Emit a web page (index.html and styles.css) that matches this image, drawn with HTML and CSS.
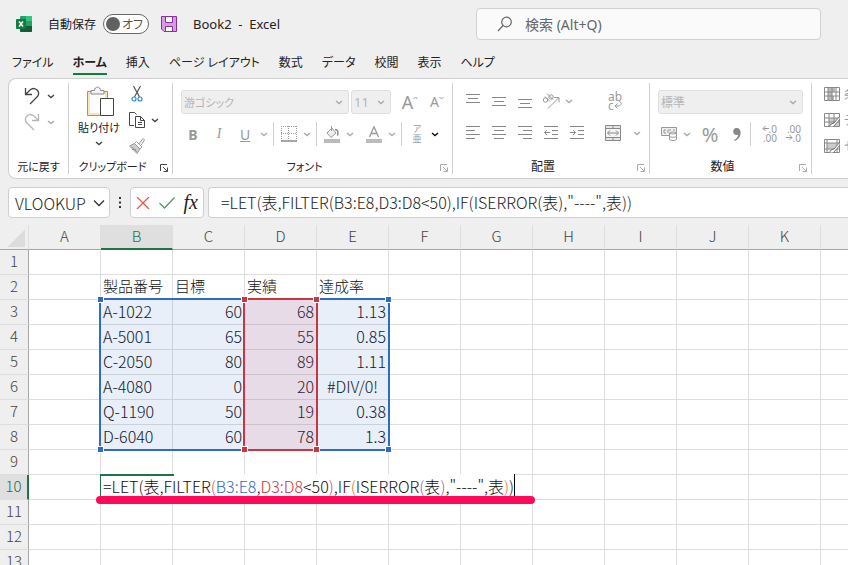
FILE: index.html
```
<!DOCTYPE html>
<html lang="ja">
  <head>
    <meta charset="utf-8">
    <meta name="viewport" content="width=device-width,initial-scale=1.0">
    <title>Book2 - Excel</title>
    <link rel="stylesheet" href="styles.css">
  </head>
  <body>
    <!-- shared icons -->
    <svg class="defs">
      <symbol id="chev" viewBox="0 0 10 10"><path d="M2 4l3 2.5L8 4" fill="none" stroke="currentColor" stroke-width="1.4"/></symbol>
      <symbol id="launcher" viewBox="0 0 8 8"><path d="M.5 7V.5H7M3 3l4 4M7.5 3.500v4h-4" fill="none" stroke="currentColor"/></symbol>
    </svg>

    <header class="titlebar">
      <svg class="logo" width="16" height="16" viewBox="0 0 16 16">
        <rect x="4" width="12" height="16" rx="1" fill="#21a366"/>
        <path d="M10 0h5a1 1 0 0 1 1 1v4h-6z" fill="#33c481"/>
        <path d="M4 5h6v5H4z" fill="#107c41"/>
        <path d="M4 10h12v5a1 1 0 0 1-1 1H5a1 1 0 0 1-1-1z" fill="#185c37"/>
        <path d="M10 10h6v-5h-6z" fill="#21a366"/>
        <rect y="3" width="10" height="10" rx="1" fill="#107c41"/>
        <path d="M3 5.500l4 5M7 5.500l-4 5" stroke="#fff" stroke-width="1.500"/>
      </svg>
      <label class="autosave">
        自動保存
        <span class="toggle"><input type="checkbox" aria-label="自動保存"><i></i><span>オフ</span></span>
      </label>
      <button class="save" aria-label="保存">
        <svg width="16" height="16" viewBox="0 0 16 16">
          <path d="M.5.5h15v15H3L.5 13z" fill="#d79be0" stroke="#8b2fa0"/>
          <path d="M4.500.5h7v6h-7z" fill="#fff" stroke="#8b2fa0"/>
          <path d="M4.500 15.500v-5h7v5z" fill="#fff" stroke="#8b2fa0"/>
        </svg>
      </button>
      <span class="doc">Book2&nbsp; -&nbsp; Excel</span>
      <label class="search">
        <svg width="16" height="16" viewBox="0 0 16 16" fill="none" stroke="#666" stroke-width="1.200"><circle cx="9.500" cy="6" r="4.800"/><path d="M6 9.500L1 15"/></svg>
        <input type="text" placeholder="検索 (Alt+Q)">
      </label>
    </header>

    <nav class="tabs">
      <a href="#">ファイル</a>
      <a href="#" class="active">ホーム</a>
      <a href="#">挿入</a>
      <a href="#">ページ レイアウト</a>
      <a href="#">数式</a>
      <a href="#">データ</a>
      <a href="#">校閲</a>
      <a href="#">表示</a>
      <a href="#">ヘルプ</a>
    </nav>

    <div class="ribbon">
      <section class="group undo">
        <div class="tools">
          <div class="split">
            <button aria-label="元に戻す"><svg width="16" height="18" viewBox="0 0 16 18" fill="none" stroke="#444" stroke-width="1.300"><path d="M1.500 1v6.500H8M1.800 7.200L6 3c3-2.500 6-1.500 7.500.5S15 8 13 10l-7 7"/></svg></button>
            <svg class="chev dark"><use href="#chev"/></svg>
          </div>
          <div class="split">
            <button aria-label="やり直し"><svg width="16" height="18" viewBox="0 0 16 18" fill="none" stroke="#b5b5b5" stroke-width="1.300"><path d="M14.500 1v6.500H8M14.200 7.200L10 3C7 .5 4 1.500 2.500 3.500S1 8 3 10l7 7"/></svg></button>
            <svg class="chev"><use href="#chev"/></svg>
          </div>
        </div>
        <footer><span>元に戻す</span></footer>
      </section>

      <section class="group clipboard">
        <div class="tools">
          <button class="paste">
            <svg class="board" width="30" height="32" viewBox="0 0 30 32">
              <path d="M1.500 5.500h20v24h-20z" fill="#fce3b0" stroke="#e0832a"/>
              <path d="M4 8h15v19H4z" fill="#fff"/>
              <path d="M5 8V4.500h3.500C8.500 0 14.500 0 14.500 4.500H18V8z" fill="#f4f4f4" stroke="#888"/>
              <path d="M14.500 12.500h13v17h-13z" fill="#fff" stroke="#444"/>
            </svg>
            貼り付け
            <svg class="chev dark"><use href="#chev"/></svg>
          </button>
          <div class="clip-col">
            <button aria-label="切り取り"><svg width="16" height="16" viewBox="0 0 16 16" fill="none"><path d="M4.500 0l6 11M11.500 0l-6 11" stroke="#555" stroke-width="1.200"/><circle cx="5" cy="13" r="2" stroke="#2f8ad0" stroke-width="1.200"/><circle cx="11" cy="13" r="2" stroke="#2f8ad0" stroke-width="1.200"/></svg></button>
            <div class="split">
              <button aria-label="コピー"><svg width="16" height="16" viewBox="0 0 16 16" fill="#fff" stroke="#444"><path d="M5 13.500H.5V.5h5l2 2"/><path d="M6.500 4.500h5l4 4v7h-9zM11.500 4.500v4h4M9 10.500h4M9 12.500h4"/></svg></button>
              <svg class="chev dark"><use href="#chev"/></svg>
            </div>
            <button aria-label="書式のコピー"><svg width="16" height="16" viewBox="0 0 16 16" fill="#ccc" stroke="#999"><path d="M.5 8l5-2.500 5.500 5.500-3 4.500z"/><path d="M5.500 5.500l2-2 5.500 5.500-2 2zM10 6l4-5.500 1.500 1.500L12 7.500" fill="#fff"/><path d="M3 9l5 5M3 11.500h4" fill="none"/></svg></button>
          </div>
        </div>
        <footer><span>クリップボード</span><button class="launch dark" aria-label="クリップボードの設定"><svg width="8" height="8"><use href="#launcher"/></svg></button></footer>
      </section>

      <section class="group font">
        <div class="tools">
          <div class="row">
            <label class="combo font-name"><select aria-label="フォント" disabled><option>游ゴシック</option></select><svg class="chev"><use href="#chev"/></svg></label>
            <label class="combo font-size"><select aria-label="サイズ" disabled><option>11</option></select><svg class="chev"><use href="#chev"/></svg></label>
            <button class="grow" aria-label="拡大" disabled>A<svg width="5" height="4" viewBox="0 0 5 4"><path d="M.5 3l2-2 2 2" fill="none" stroke="currentColor"/></svg></button>
            <button class="grow small" aria-label="縮小" disabled>A<svg width="5" height="4" viewBox="0 0 5 4"><path d="M.5 1l2 2 2-2" fill="none" stroke="currentColor"/></svg></button>
          </div>
          <div class="row">
            <button class="tool letter" disabled><b>B</b></button>
            <button class="tool letter italic" disabled><i>I</i></button>
            <button class="tool letter" disabled><u>U</u></button>
            <svg class="chev"><use href="#chev"/></svg>
            <span class="sep"></span>
            <button class="tool" aria-label="罫線" disabled><svg width="16" height="16" viewBox="0 0 16 16" fill="none" stroke="#999"><path d="M.5 0v15M15.500 0v15M0 .5h16M7.500 0v15M0 7.500h16" stroke-dasharray="1 1"/><path d="M0 15h16" stroke="#888" stroke-width="1.500"/></svg></button>
            <svg class="chev"><use href="#chev"/></svg>
            <span class="sep"></span>
            <button class="tool" aria-label="塗りつぶし" disabled><svg width="16" height="17" viewBox="0 0 16 17"><path d="M3 7l5-5 4 5-5 4.500zM7.500 0v5" fill="#eee" stroke="#999"/><path d="M11 3.500c3 0 3.500 3 2.500 6" fill="none" stroke="#888" stroke-width="1.500"/><path d="M0 13h16v4H0z" fill="#bbb"/></svg></button>
            <svg class="chev"><use href="#chev"/></svg>
            <button class="tool color" aria-label="フォントの色" disabled><svg width="16" height="17" viewBox="0 0 16 17"><path d="M3.500 11L8 .8 12.500 11M5 7.500h6" fill="none" stroke="#999" stroke-width="1.300"/><path d="M0 13h16v4H0z" fill="#bbb"/></svg></button>
            <svg class="chev"><use href="#chev"/></svg>
            <span class="sep"></span>
            <button class="tool ruby" disabled><span>ア</span><span>亜</span></button>
            <svg class="chev black"><use href="#chev"/></svg>
          </div>
        </div>
        <footer><span>フォント</span><button class="launch" aria-label="フォントの設定"><svg width="8" height="8"><use href="#launcher"/></svg></button></footer>
      </section>

      <section class="group align">
        <div class="tools">
          <div class="align-grid">
            <button class="tool" aria-label="上揃え" disabled><svg width="14" height="14" viewBox="0 0 14 14"><path d="M0 .5h14M2 4.500h10M0 8.500h14" stroke="#888"/></svg></button>
            <button class="tool" aria-label="上下中央揃え" disabled><svg width="14" height="14" viewBox="0 0 14 14"><path d="M0 3.500h14M2 7.500h10M0 11.500h14" stroke="#888"/></svg></button>
            <button class="tool" aria-label="下揃え" disabled><svg width="14" height="14" viewBox="0 0 14 14"><path d="M0 5.500h14M2 9.500h10M0 13.500h14" stroke="#888"/></svg></button>
            <button class="tool" aria-label="方向" disabled><svg width="18" height="16" viewBox="0 0 18 16" fill="none" stroke="#999"><path d="M6 15.500L16.500 5M12 4.500h5v5"/><circle cx="3.500" cy="7" r="2.200"/><path d="M3 3.500l5 5"/><circle cx="9" cy="4" r="2.200"/><path d="M5 .5l6 6"/></svg></button>
            <svg class="chev"><use href="#chev"/></svg>
            <button class="tool" aria-label="左揃え" disabled><svg width="14" height="14" viewBox="0 0 14 14"><path d="M0 .5h14M0 4.500h9M0 8.500h14M0 12.500h9" stroke="#888"/></svg></button>
            <button class="tool" aria-label="中央揃え" disabled><svg width="14" height="14" viewBox="0 0 14 14"><path d="M0 .5h14M2 4.500h10M0 8.500h14M2 12.500h10" stroke="#888"/></svg></button>
            <button class="tool" aria-label="右揃え" disabled><svg width="14" height="14" viewBox="0 0 14 14"><path d="M0 .5h14M5 4.500h9M0 8.500h14M5 12.500h9" stroke="#888"/></svg></button>
            <button class="tool" aria-label="インデントを減らす" disabled><svg width="14" height="14" viewBox="0 0 14 14" fill="none" stroke="#888"><path d="M0 .5h14M8 4.500h6M8 8.500h6M0 12.500h14M.5 6.500H6M3 4L.5 6.500 3 9"/></svg></button>
            <button class="tool" aria-label="インデントを増やす" disabled><svg width="14" height="14" viewBox="0 0 14 14" fill="none" stroke="#888"><path d="M0 .5h14M8 4.500h6M8 8.500h6M0 12.500h14M0 6.500h5.500M3 4l2.500 2.500L3 9"/></svg></button>
          </div>
          <span class="sep tall"></span>
          <div class="merge-col">
            <button class="tool wrap" aria-label="折り返して全体を表示する" disabled><span>ab</span><span>c<svg width="8" height="8" viewBox="0 0 8 8" fill="none" stroke="currentColor"><path d="M5 0c3 1 3 5-1 5H1M3.500 2.500L1 5l2.500 2.500"/></svg></span></button>
            <div class="split">
              <button class="tool" aria-label="セルを結合して中央揃え" disabled><svg width="16" height="16" viewBox="0 0 16 16" fill="none" stroke="#888"><path d="M.5.5h15v15H.5z" fill="#e6e6e6"/><path d="M.5 3.500h15v9H.5z" fill="#f4f4f4"/><path d="M8 0v3.500M8 12.500V16M3 8h10M5 5.500L2.500 8 5 10.500M11 5.500L13.500 8 11 10.500"/></svg></button>
              <svg class="chev"><use href="#chev"/></svg>
            </div>
          </div>
        </div>
        <footer><span>配置</span><button class="launch" aria-label="配置の設定"><svg width="8" height="8"><use href="#launcher"/></svg></button></footer>
      </section>

      <section class="group number">
        <div class="tools">
          <div class="row">
            <label class="combo"><select aria-label="表示形式" disabled><option>標準</option></select><svg class="chev"><use href="#chev"/></svg></label>
          </div>
          <div class="row">
            <button class="tool" aria-label="通貨表示形式" disabled><svg width="16" height="14" viewBox="0 0 16 14" fill="#fff" stroke="#999"><path d="M.5.5h15v8H.5z" fill="#eee"/><path d="M5 3H3v3h2M7 6V3h3M12 3h2" fill="none"/><path d="M8.500 6v6.500c1 1.300 6 1.300 7 0V6c-1-1.300-6-1.300-7 0c1 1.300 6 1.300 7 0M8.500 9.500c1 1 6 1 7 0"/></svg></button>
            <svg class="chev"><use href="#chev"/></svg>
            <button class="tool percent" disabled>%</button>
            <button class="tool comma" aria-label="桁区切り" disabled><svg width="8" height="13" viewBox="0 0 8 13"><path d="M4 0a3.500 3.500 0 1 0-.5 7C4.500 7 5 6.800 5.200 6.500 5 9 3.500 11 1 12l.5 1C6 11.500 8 8 7.500 3.500 7.200 1 5.500 0 4 0z" fill="#888"/></svg></button>
            <span class="sep"></span>
            <button class="tool decimal" aria-label="小数点以下の表示桁数を増やす" disabled><span><svg width="7" height="7" viewBox="0 0 7 7"><path d="M7 3.500H1M3.500 1L1 3.500 3.500 6" fill="none" stroke="currentColor"/></svg>.0</span><span>.00</span></button>
            <button class="tool decimal" aria-label="小数点以下の表示桁数を減らす" disabled><span>.00</span><span><svg width="7" height="7" viewBox="0 0 7 7"><path d="M0 3.500h6M3.500 1L6 3.500 3.500 6" fill="none" stroke="currentColor"/></svg>.0</span></button>
          </div>
        </div>
        <footer><span>数値</span><button class="launch" aria-label="数値の設定"><svg width="8" height="8"><use href="#launcher"/></svg></button></footer>
      </section>

      <section class="group styles">
        <div class="tools">
          <button disabled><svg width="16" height="14" viewBox="0 0 16 14"><path d="M.5.5h15v13H.5z" fill="#fff" stroke="#888"/><path d="M4 1h7v4H4zM4 5h4v4H4zM4 9h6v4H4z" fill="#bbb"/><path d="M4 0v14M8 0v14M12 0v14M0 5h16M0 9h16" stroke="#888" fill="none"/></svg>条件付き書式</button>
          <button disabled><svg width="16" height="14" viewBox="0 0 16 14"><path d="M.5.5h15v13H.5z" fill="#fff" stroke="#888"/><path d="M5 5h10v8H5z" fill="#ccc"/><path d="M5 0v14M10 0v14M0 5h16M0 9h16" stroke="#888" fill="none"/><path d="M16 3l-6 7-3 1-2 3h4l2-2 5-6z" fill="#fff" stroke="#777"/></svg>テーブルとして書式設定</button>
          <button disabled><svg width="16" height="14" viewBox="0 0 16 14"><path d="M.5.5h15v13H.5z" fill="#fff" stroke="#888"/><path d="M3 4h10v6H3z" fill="#ccc"/><path d="M3 0v14M13 0v14M0 4h16M0 10h16" stroke="#888" fill="none"/><path d="M16 3l-6 7-3 1-2 3h4l2-2 5-6z" fill="#fff" stroke="#777"/></svg>セルのスタイル</button>
        </div>
        <footer><span>スタイル</span></footer>
      </section>
    </div>

    <div class="formula-bar">
      <label class="box name-box">
        <input type="text" value="VLOOKUP" aria-label="名前ボックス">
        <svg width="12" height="8" viewBox="0 0 12 8"><path d="M1 1.500l5 5 5-5" fill="none" stroke="#333" stroke-width="1.300"/></svg>
      </label>
      <svg class="dots" width="2" height="11" viewBox="0 0 2 11"><path d="M0 0h2v2H0zM0 4.500h2v2H0zM0 9h2v2H0z" fill="#333"/></svg>
      <div class="box fx-box">
        <button aria-label="キャンセル"><svg width="14" height="12" viewBox="0 0 14 12"><path d="M1 0l12 12M13 0L1 12" stroke="#e8564a" stroke-width="1.300"/></svg></button>
        <button aria-label="入力"><svg width="16" height="12" viewBox="0 0 16 12"><path d="M.5 6l5 5L15.500.5" fill="none" stroke="#4a9f63" stroke-width="1.300"/></svg></button>
        <button class="fx">fx</button>
      </div>
      <input class="box formula" type="text" aria-label="数式バー" value="=LET(表,FILTER(B3:E8,D3:D8&lt;50),IF(ISERROR(表),&quot;----&quot;,表))">
    </div>

    <main class="sheet">
      <table>
        <colgroup><col class="rowhead"><col span="12"></colgroup>
        <thead>
          <tr><th class="corner"></th><th>A</th><th class="on">B</th><th>C</th><th>D</th><th>E</th><th>F</th><th>G</th><th>H</th><th>I</th><th>J</th><th>K</th><th></th></tr>
        </thead>
        <tbody>
          <tr><th>1</th><td></td><td></td><td></td><td></td><td></td><td></td><td></td><td></td><td></td><td></td><td></td><td></td></tr>
          <tr class="labels"><th>2</th><td></td><td>製品番号</td><td>目標</td><td>実績</td><td>達成率</td><td></td><td></td><td></td><td></td><td></td><td></td><td></td></tr>
          <tr><th>3</th><td></td><td>A-1022</td><td class="num">60</td><td class="num">68</td><td class="num">1.13</td><td></td><td></td><td></td><td></td><td></td><td></td><td></td></tr>
          <tr><th>4</th><td></td><td>A-5001</td><td class="num">65</td><td class="num">55</td><td class="num">0.85</td><td></td><td></td><td></td><td></td><td></td><td></td><td></td></tr>
          <tr><th>5</th><td></td><td>C-2050</td><td class="num">80</td><td class="num">89</td><td class="num">1.11</td><td></td><td></td><td></td><td></td><td></td><td></td><td></td></tr>
          <tr><th>6</th><td></td><td>A-4080</td><td class="num">0</td><td class="num">20</td><td class="err">#DIV/0!</td><td></td><td></td><td></td><td></td><td></td><td></td><td></td></tr>
          <tr><th>7</th><td></td><td>Q-1190</td><td class="num">50</td><td class="num">19</td><td class="num">0.38</td><td></td><td></td><td></td><td></td><td></td><td></td><td></td></tr>
          <tr><th>8</th><td></td><td>D-6040</td><td class="num">60</td><td class="num">78</td><td class="num">1.3</td><td></td><td></td><td></td><td></td><td></td><td></td><td></td></tr>
          <tr><th>9</th><td></td><td></td><td></td><td></td><td></td><td></td><td></td><td></td><td></td><td></td><td></td><td></td></tr>
          <tr>
            <th class="on">10</th><td></td>
            <td class="editing">
              <div class="editor">=LET(表,FILTER<span class="p2">(</span><span class="blue">B3:E8</span>,<span class="red">D3:D8</span>&lt;50<span class="p2">)</span>,IF<span class="p3">(</span>ISERROR<span class="p4">(</span>表<span class="p4">)</span>,"----",表<span class="p3">)</span>)</div>
              <div class="marker"></div>
            </td>
            <td></td><td></td><td></td><td></td><td></td><td></td><td></td><td></td><td></td><td></td>
          </tr>
          <tr><th>11</th><td></td><td></td><td></td><td></td><td></td><td></td><td></td><td></td><td></td><td></td><td></td><td></td></tr>
          <tr><th>12</th><td></td><td></td><td></td><td></td><td></td><td></td><td></td><td></td><td></td><td></td><td></td><td></td></tr>
          <tr><th>13</th><td></td><td></td><td></td><td></td><td></td><td></td><td></td><td></td><td></td><td></td><td></td><td></td></tr>
        </tbody>
      </table>
      <!-- referenced ranges -->
      <div class="range all"><i></i><i></i><i></i><i></i></div>
      <div class="range actual"><i></i><i></i><i></i><i></i></div>
    </main>
  </body>
</html>
```
FILE: styles.css
```
* {
  box-sizing: border-box;
}
body {
  margin: 0;
  height: 100vh;
  overflow: hidden;
  display: flex;
  flex-direction: column;
  background: #efefef;
  color: #222;
  font-family: "Noto Sans", "Noto Sans CJK JP", sans-serif;
  font-size: 12px;
  font-feature-settings: "palt";
}
button, input, select {
  font: inherit;
  font-feature-settings: inherit;
  color: inherit;
  border: 0;
  padding: 0;
  margin: 0;
  background: none;
}
button:disabled, select:disabled {
  color: #999;
  opacity: 1;
}
svg {
  display: block;
  flex: none;
}
.defs {
  position: absolute;
  width: 0;
  height: 0;
}
.chev {
  width: 10px;
  height: 10px;
  color: #aaa;
}
.dark {
  color: #444;
}
.black {
  color: #111;
}

/* title bar */
.titlebar {
  display: flex;
  align-items: center;
  height: 48px;
  padding: 0 27px 0 16px;
}
.autosave {
  display: flex;
  align-items: center;
  gap: 7px;
  margin-left: 16px;
}
.toggle {
  display: flex;
  align-items: center;
  justify-content: space-between;
  width: 46px;
  height: 20px;
  padding: 0 5px 0 2px;
  border: 1px solid #666;
  border-radius: 10px;
  background: #fff;
  color: #555;
}
.toggle input {
  position: absolute;
  opacity: 0;
}
.toggle i {
  width: 14px;
  height: 14px;
  border-radius: 50%;
  background: #616161;
}
.save {
  margin-left: 12px;
}
.doc {
  margin-left: 16px;
  font-size: 13px;
}
.search {
  display: flex;
  align-items: center;
  gap: 12px;
  width: 345px;
  height: 32px;
  margin-left: auto;
  padding: 0 20px;
  border: 1px solid #d0d0d0;
  border-radius: 4px;
  background: #fafafa;
  font-size: 14px;
}
.search input {
  flex: 1;
  min-width: 0;
  outline: none;
}
.search input::placeholder {
  color: #666;
}

/* tabs */
.tabs {
  display: flex;
  gap: 19px;
  height: 30px;
  padding: 5px 12px 0;
  line-height: 20px;
}
.tabs a {
  height: 22px;
  color: #222;
  text-decoration: none;
  white-space: nowrap;
}
.tabs .active {
  border-bottom: 2px solid #107c41;
  font-weight: 700;
}

/* ribbon */
.ribbon {
  display: flex;
  height: 101px;
  flex: none;
  margin-left: 8px;
  padding: 4px 0;
  overflow: hidden;
  border: 1px solid #cfcfcf;
  border-right: 0;
  border-radius: 8px 0 0 8px;
  background: #fff;
}
.group {
  display: flex;
  flex-direction: column;
  flex: none;
  padding: 0 8px;
  border-right: 1px solid #cfcfcf;
}
.group .tools {
  flex: 1;
}
.group footer {
  position: relative;
  height: 14px;
  padding-right: 16px;
  line-height: 14px;
  text-align: center;
  white-space: nowrap;
}
.launch {
  position: absolute;
  right: -4px;
  bottom: 2px;
  color: #aaa;
}
.launch.dark {
  color: #444;
}
.split {
  display: flex;
  align-items: center;
}
.row {
  display: flex;
  align-items: center;
  height: 24px;
}
.sep {
  width: 1px;
  height: 24px;
  background: #cfcfcf;
}
.tool {
  display: flex;
  align-items: center;
  justify-content: center;
  width: 22px;
  height: 24px;
}
.undo {
  width: 60px;
}
.undo .split {
  height: 26px;
  padding-left: 7px;
  gap: 6px;
}
.undo .chev {
  margin-right: -4px;
}
.undo footer {
  padding: 0;
  font-size: 11px;
}
.clipboard {
  width: 104px;
}
.clipboard .tools {
  display: flex;
  gap: 8px;
}
.clipboard footer {
  font-size: 11px;
}
.paste {
  display: flex;
  flex-direction: column;
  align-items: center;
  width: 44px;
  padding-top: 3px;
  font-size: 11px;
  line-height: 20px;
  white-space: nowrap;
}
.board {
  margin-left: 4px;
}
.clip-col {
  display: flex;
  flex-direction: column;
  gap: 10px;
  padding-top: 3px;
}
.clip-col .split {
  gap: 5px;
}
.clip-col button {
  width: 16px;
}
.font {
  width: 280px;
}
.font footer {
  font-size: 11px;
}
.font .tools, .number .tools {
  display: flex;
  flex-direction: column;
  gap: 8px;
  padding-top: 7px;
}
.font .row {
  gap: 2px;
}
.font .sep {
  margin: 0 2px;
}
.combo {
  display: flex;
  align-items: center;
  width: 147px;
  height: 24px;
  padding: 0 4px 0 2px;
  border: 1px solid #dedede;
  border-radius: 3px;
  background: #efefef;
}
.combo select {
  flex: 1;
  min-width: 0;
  appearance: none;
  color: #b5b5b5;
}
.font-name {
  width: 170px;
  font-size: 11px;
}
.font-size {
  width: 40px;
  font-size: 13px;
}
.grow {
  display: flex;
  width: 26px;
  justify-content: flex-end;
  font-size: 18px;
  line-height: 22px;
}
.grow svg {
  margin-top: 5px;
}
.grow.small {
  width: 24px;
  font-size: 14px;
}
.letter {
  width: 24px;
  font-size: 14px;
}
.italic {
  font-family: "Liberation Serif", serif;
}
.color {
  margin-left: 6px;
}
.ruby {
  flex-direction: column;
  font-size: 9px;
  line-height: 10px;
}
.align {
  width: 197px;
}
.align .tools {
  display: flex;
  gap: 6px;
  padding-top: 6px;
}
.align-grid {
  display: grid;
  grid-template-columns: repeat(5, 26px);
  grid-template-rows: 24px 24px;
  row-gap: 8px;
  align-items: center;
  margin-left: -1px;
}
.align-grid .tool {
  width: 26px;
}
.sep.tall {
  height: 62px;
}
.merge-col {
  display: flex;
  flex-direction: column;
  gap: 8px;
}
.merge-col .split {
  gap: 8px;
}
.wrap {
  flex-direction: column;
  width: 26px;
  font-size: 12px;
  line-height: 9px;
}
.wrap span {
  display: flex;
}
.number {
  width: 162px;
}
.number .row {
  gap: 2px;
}
.percent {
  width: 32px;
  font-size: 20px;
}
.comma {
  width: 18px;
}
.number .sep {
  margin: 0 2px;
}
.decimal {
  flex-direction: column;
  align-items: flex-end;
  width: 22px;
  font-size: 10px;
  line-height: 9px;
}
.decimal span {
  display: flex;
}
.styles {
  padding-left: 12px;
  border: 0;
}
.styles .tools {
  display: flex;
  flex-direction: column;
  gap: 8px;
  padding-top: 2px;
}
.styles button {
  display: flex;
  align-items: center;
  gap: 4px;
  height: 18px;
  white-space: nowrap;
}

/* formula bar */
.formula-bar {
  display: flex;
  align-items: center;
  flex: none;
  margin-left: 8px;
  padding: 8px 0 7px;
  font-family: "Noto Sans CJK JP", sans-serif;
  font-size: 16px;
  font-weight: 300;
  font-feature-settings: normal;
}
.box {
  height: 31px;
  border: 1px solid #cfcfcf;
  border-radius: 4px;
  background: #fff;
}
.name-box {
  display: flex;
  align-items: center;
  justify-content: space-between;
  width: 102px;
  padding: 0 4px 0 6px;
}
.name-box input {
  width: 76px;
}
.dots {
  margin: 0 9px;
}
.fx-box {
  display: flex;
  align-items: center;
  justify-content: space-between;
  width: 74px;
  margin-right: 4px;
  padding: 0 5px;
}
.fx {
  font-family: "Liberation Serif", serif;
  font-size: 20px;
  font-style: italic;
  font-weight: 400;
}
.formula {
  flex: 1;
  min-width: 0;
  padding: 0 12px 2px;
  border-right: 0;
  border-radius: 4px 0 0 4px;
}

/* grid */
.sheet {
  position: relative;
  flex: 1;
  min-height: 0;
  overflow: hidden;
  background: #fff;
  font-family: "Noto Sans CJK JP", sans-serif;
  font-size: 16px;
  font-weight: 300;
  font-feature-settings: normal;
}
table {
  width: 893px;
  table-layout: fixed;
  border-spacing: 0;
}
col {
  width: 72px;
}
col.rowhead {
  width: 29px;
}
th, td {
  height: 25px;
  padding: 0 2px 2px;
  border-right: 1px solid #dedede;
  border-bottom: 1px solid #dedede;
  line-height: 22px;
  text-align: left;
  white-space: nowrap;
  color: #111;
}
th {
  padding: 0 0 2px;
  background: #efefef;
  color: #444;
  font-size: 15px;
  font-weight: 300;
  text-align: center;
}
.labels td {
  font-size: 15px;
}
thead th {
  border-bottom-color: #a6a6a6;
}
tbody th {
  border-right-color: #a6a6a6;
}
th.on {
  background: #dfdfdf;
  color: #217346;
}
thead th.on {
  padding-bottom: 1px;
  border-bottom: 2px solid #217346;
}
tbody th.on {
  border-right: 2px solid #217346;
}
.corner {
  background: linear-gradient(135deg, transparent 50%, #dcdcdc 50%) 8px 5px / 17px 17px no-repeat #efefef;
}
.num {
  text-align: right;
}
.err {
  text-align: center;
}
.editing {
  position: relative;
}
.editor {
  position: absolute;
  top: -1px;
  left: -1px;
  height: 25px;
  padding-left: 3px;
  border-right: 1px solid #000;
  background: linear-gradient(#217346, #217346) 0 0 / 74px 2px no-repeat, #fff;
  box-shadow: inset 1px 0 #217346;
  line-height: 24px;
}
.marker {
  position: absolute;
  top: 21px;
  left: -5px;
  width: 439px;
  height: 8px;
  border-radius: 4px;
  background: #ff0a5a;
}
.blue {
  color: #2f6bc8;
}
.red {
  color: #c8373f;
}
.p2 {
  color: #c0507a;
}
.p3 {
  color: #c8743c;
}
.p4 {
  color: #9a55b8;
}
.range {
  position: absolute;
  top: 73px;
  left: 99px;
  width: 291px;
  height: 153px;
  border: 2px solid #2f6bc8;
  background: rgba(47, 107, 200, 0.11);
}
.range.actual {
  left: 243px;
  width: 75px;
  border-color: #c8373f;
  background: rgba(226, 60, 90, 0.11);
}
.range i {
  position: absolute;
  width: 7px;
  height: 7px;
  border: 1px solid #fff;
  background: #2f6bc8;
}
.range.actual i {
  background: #c8373f;
}
.range i:nth-child(-n+2) {
  top: -4px;
}
.range i:nth-child(n+3) {
  bottom: -4px;
}
.range i:nth-child(odd) {
  left: -4px;
}
.range i:nth-child(even) {
  right: -4px;
}
```
